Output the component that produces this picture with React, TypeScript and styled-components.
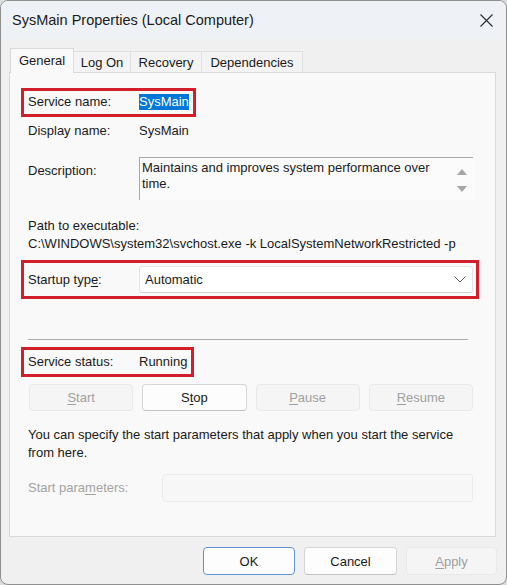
import React from 'react';
import styled, { createGlobalStyle, css } from 'styled-components';

const Global = createGlobalStyle`
  html, body { margin: 0; padding: 0; background: #dcdcdc; }
  body { font-family: "Liberation Sans", Arial, sans-serif; }
  * { box-sizing: border-box; }
`;

const Window = styled.div`
  width: 507px;
  height: 585px;
  border: 1px solid #8f8f8f;
  border-radius: 8px;
  background: #f0f0f0;
  overflow: hidden;
  display: flex;
  flex-direction: column;
  font-size: 13px;
  color: #1a1a1a;
`;

const TitleBar = styled.div`
  height: 38px;
  flex: none;
  display: flex;
  align-items: center;
  justify-content: space-between;
  padding: 0 13px 0 11px;
  background: #eef2f7;
`;

const Title = styled.div`
  font-size: 14.5px;
  color: #1b1b1b;
`;

const CloseIcon = styled.svg`
  width: 13px;
  height: 13px;
  display: block;
`;

const Body = styled.div`
  flex: 1;
  display: flex;
  flex-direction: column;
  padding: 9px 10px 0 8px;
`;

const TabStrip = styled.div`
  height: 25px;
  display: flex;
  align-items: flex-end;
  padding-left: 1px;
  margin-bottom: -1px;
  position: relative;
  z-index: 1;
`;

const Tab = styled.div<{ $active?: boolean; $w: number }>`
  width: ${(p) => p.$w}px;
  display: flex;
  align-items: center;
  justify-content: center;
  border: 1px solid #e0e0e0;
  border-bottom: none;
  ${(p) =>
    p.$active
      ? css`
          height: 25px;
          background: #f9f9f9;
          border-color: #d9d9d9;
          padding-bottom: 2px;
        `
      : css`
          height: 21px;
          margin-bottom: 1px;
          background: #f3f3f3;
          margin-left: -1px;
          padding-top: 1px;
        `}
`;

const Panel = styled.div`
  height: 465px;
  flex: none;
  background: #f9f9f9;
  border: 1px solid #d9d9d9;
  padding: 15px 22px 0 18px;
  display: flex;
  flex-direction: column;
`;

const Highlight = styled.div<{ $inline?: boolean; $pad: string; $top?: number }>`
  border: 3px solid #d31f2c;
  padding: ${(p) => p.$pad};
  ${(p) =>
    p.$inline
      ? css`
          align-self: flex-start;
          margin: ${p.$top || 0}px 0 0 -7px;
        `
      : css`
          margin: ${p.$top || 0}px -6px 0 -7px;
        `}
`;

const Row = styled.div<{ $top?: number; $align?: string }>`
  display: flex;
  align-items: ${(p) => p.$align || 'center'};
  margin-top: ${(p) => p.$top || 0}px;
  line-height: 16px;
`;

const Label = styled.div<{ $w?: number; $dim?: boolean; $padTop?: number }>`
  width: ${(p) => p.$w || 111}px;
  flex: none;
  color: ${(p) => (p.$dim ? '#a3a3a3' : '#1a1a1a')};
  padding-top: ${(p) => p.$padTop || 0}px;
`;

const Selected = styled.span`
  background: #0078d7;
  color: #fff;
  line-height: 16px;
  display: inline-block;
`;

const TextBox = styled.div`
  width: 334px;
  height: 43px;
  background: #fbfbfb;
  border-top: 1px solid #a8a8a8;
  border-left: 1px solid #a8a8a8;
  display: flex;
  line-height: 16px;
`;

const TextBoxText = styled.div`
  flex: 1;
  padding: 2px 0 0 2px;
`;

const ScrollCol = styled.div`
  width: 22px;
  display: flex;
  flex-direction: column;
  align-items: center;
  justify-content: center;
  gap: 11px;
  padding-top: 2px;
`;

const Arrow = styled.svg`
  width: 10px;
  height: 6px;
  display: block;
`;

const PathBlock = styled.div`
  margin-top: 17px;
  line-height: 18px;
`;

const Select = styled.div`
  flex: 1;
  height: 27px;
  background: #ffffff;
  border: 1px solid #e4e4e4;
  border-bottom-color: #d2d2d2;
  border-radius: 3px;
  display: flex;
  align-items: center;
  justify-content: space-between;
  padding: 0 6px 0 5px;
`;

const Chevron = styled.svg`
  width: 12px;
  height: 7px;
  display: block;
`;

const Separator = styled.div`
  height: 1px;
  background: #adadad;
  margin: 40px 5px 0 0;
`;

const Buttons = styled.div`
  display: grid;
  grid-template-columns: repeat(4, 1fr);
  gap: 9px;
  margin: 7px 0 0 1px;
`;

const Button = styled.div<{ $kind?: 'normal' | 'disabled' | 'default'; $w?: number }>`
  height: ${(p) => (p.$w ? 28 : 27)}px;
  ${(p) => (p.$w ? `width: ${p.$w}px;` : '')}
  display: flex;
  align-items: center;
  justify-content: center;
  border-radius: 4px;
  font-size: 13px;
  ${(p) =>
    p.$kind === 'disabled'
      ? css`
          background: #f5f5f5;
          border: 1px solid #e9e9e9;
          color: #a0a0a0;
        `
      : p.$kind === 'default'
      ? css`
          background: #fdfdfd;
          border: 1px solid #5f93d4;
          color: #1a1a1a;
        `
      : css`
          background: #fdfdfd;
          border: 1px solid #d6d6d6;
          border-bottom-color: #c2c2c2;
          color: #1a1a1a;
        `}
`;

const U = styled.span`
  text-decoration: underline;
  text-underline-offset: 2px;
`;

const Paragraph = styled.div`
  margin-top: 15px;
  line-height: 18px;
`;

const Input = styled.div`
  flex: 1;
  height: 28px;
  background: #f7f7f7;
  border: 1px solid #ececec;
  border-radius: 3px;
`;

const Footer = styled.div`
  display: flex;
  justify-content: flex-end;
  gap: 9px;
  padding-top: 10px;
  margin-right: -1px;
`;

export default function App() {
  return (
    <>
      <Global />
      <Window>
        <TitleBar>
          <Title>SysMain Properties (Local Computer)</Title>
          <CloseIcon viewBox="0 0 13 13">
            <path d="M0.5 0.5 L12.5 12.5 M12.5 0.5 L0.5 12.5" stroke="#2b2b2b" strokeWidth="1.1" fill="none" />
          </CloseIcon>
        </TitleBar>
        <Body>
          <TabStrip>
            <Tab $active $w={64}>General</Tab>
            <Tab $w={58}>Log On</Tab>
            <Tab $w={72}>Recovery</Tab>
            <Tab $w={102}>Dependencies</Tab>
          </TabStrip>
          <Panel>
            <Highlight $inline $pad="3px 4px 4px 4px">
              <Row>
                <Label>Service name:</Label>
                <Selected>SysMain</Selected>
              </Row>
            </Highlight>
            <Row $top={6}>
              <Label>Display name:</Label>
              <div>SysMain</div>
            </Row>
            <Row $top={18} $align="flex-start">
              <Label $padTop={6}>Description:</Label>
              <TextBox>
                <TextBoxText>
                  Maintains and improves system performance over
                  <br />
                  time.
                </TextBoxText>
                <ScrollCol>
                  <Arrow viewBox="0 0 10 6">
                    <path d="M5 0 L10 6 L0 6 Z" fill="#a6a6a6" />
                  </Arrow>
                  <Arrow viewBox="0 0 10 6">
                    <path d="M0 0 L10 0 L5 6 Z" fill="#a6a6a6" />
                  </Arrow>
                </ScrollCol>
              </TextBox>
            </Row>
            <PathBlock>
              <div>Path to executable:</div>
              <div>C:\WINDOWS\system32\svchost.exe -k LocalSystemNetworkRestricted -p</div>
            </PathBlock>
            <Highlight $pad="3px 3px 3px 4px" $top={7}>
              <Row>
                <Label>
                  Startup typ<U>e</U>:
                </Label>
                <Select>
                  <span>Automatic</span>
                  <Chevron viewBox="0 0 12 7">
                    <path d="M0.5 0.5 L6 6 L11.5 0.5" stroke="#5f5f5f" strokeWidth="1" fill="none" />
                  </Chevron>
                </Select>
              </Row>
            </Highlight>
            <Separator />
            <Highlight $inline $pad="4px 4px 4px 4px" $top={7}>
              <Row>
                <Label>Service status:</Label>
                <div>Running</div>
              </Row>
            </Highlight>
            <Buttons>
              <Button $kind="disabled">
                <U>S</U>tart
              </Button>
              <Button $kind="normal">
                S<U>t</U>op
              </Button>
              <Button $kind="disabled">
                <U>P</U>ause
              </Button>
              <Button $kind="disabled">
                <U>R</U>esume
              </Button>
            </Buttons>
            <Paragraph>
              You can specify the start parameters that apply when you start the service
              <br />
              from here.
            </Paragraph>
            <Row $top={12}>
              <Label $w={134} $dim>
                Start para<U>m</U>eters:
              </Label>
              <Input />
            </Row>
          </Panel>
          <Footer>
            <Button $kind="default" $w={92}>OK</Button>
            <Button $kind="normal" $w={93}>Cancel</Button>
            <Button $kind="disabled" $w={91}>
              <U>A</U>pply
            </Button>
          </Footer>
        </Body>
      </Window>
    </>
  );
}
